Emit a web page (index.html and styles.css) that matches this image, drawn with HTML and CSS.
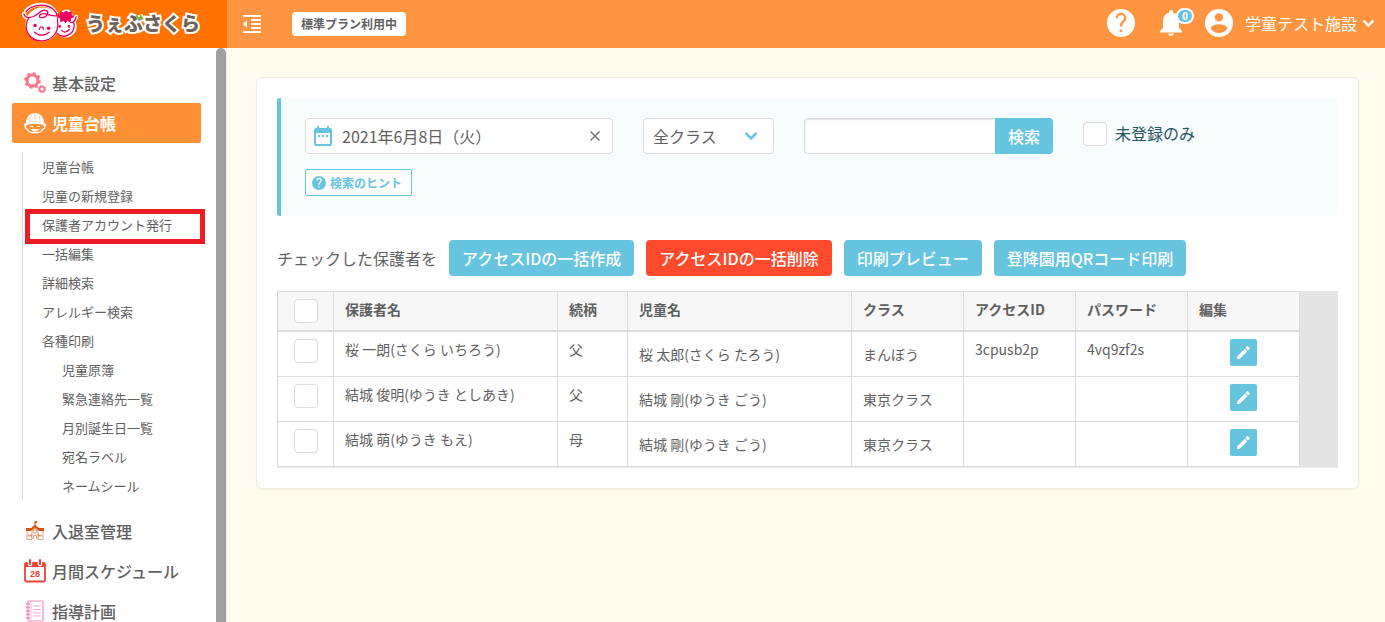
FILE: index.html
```html
<!DOCTYPE html>
<html lang="ja">
<head>
<meta charset="utf-8">
<meta name="viewport" content="width=device-width, initial-scale=1">
<title>保護者アカウント発行 | うぇぶさくら</title>
<link rel="stylesheet" href="styles.css">
</head>
<body>
<svg class="sprite" aria-hidden="true">
  <symbol id="i-help" viewBox="0 0 24 24"><path fill-rule="evenodd" d="M12 0a12 12 0 1 0 0 24 12 12 0 0 0 0-24zm1.100 19.700h-2.200v-2.200h2.200zm2.500-9.300-1.100 1.200c-.9.9-1.400 1.700-1.400 3.500h-2.200v-.6c0-1.300.5-2.500 1.400-3.400l1.500-1.600c.5-.4.8-1 .8-1.800a2.600 2.600 0 0 0-5.200 0H7.400a4.600 4.600 0 1 1 9.200 0c0 1.100-.4 2-1 2.700z"/></symbol>
  <symbol id="i-pencil" viewBox="0 0 24 24"><path d="M3 17.500V21h3.500L17.300 10.200l-3.500-3.500zM20.700 7a1 1 0 0 0 0-1.400l-2.300-2.300a1 1 0 0 0-1.400 0l-2.300 2.300 3.700 3.700z"/></symbol>
  <symbol id="i-chevron" viewBox="0 0 14 10"><path d="M1.500 1.800 7 7.300l5.500-5.500" fill="none" stroke="currentColor" stroke-width="2.600"/></symbol>
</svg>

<header class="header">
  <a class="brand" href="#">
    <svg class="brand-mark" viewBox="0 0 60 44" aria-hidden="true">
      <g fill="#fff" stroke="#fff" stroke-width="3" stroke-linejoin="round" stroke-linecap="round">
        <circle cx="21" cy="23" r="16"/><circle cx="45" cy="25" r="10"/><circle cx="46" cy="14" r="5"/>
        <path d="M2 12c1 6 9 5 14 2M4 9c8-9 25-9 31 2M56 15c-1 4-3 6-6 6" fill="none" stroke-width="4"/>
      </g>
      <g fill="none" stroke="#e8005f" stroke-width="1.300" stroke-linecap="round" stroke-linejoin="round">
        <path d="M2 12c1 5 8 5 13 1 5-4 8-6 11-4 2 2-1 7-5 7s-4-3 0-4c5-1 8 3 16 2"/>
        <path d="M4 10C10 2 25 1 32 7c2 2 4 4 4 6M7 16c-7 12 1 24 13 24 11 0 18-9 17-19-1-3 0-5 1-8"/>
        <path d="M36 32c7 7 18 1 18-8 0-2-1-3-1-4M56 15c-1 4-2 6-6 6"/>
        <path d="M13 31c4 4 11 4 15 0M18 28v-1c1-2 4-2 4 0v1M41 29c2 3 6 2 8-1"/>
      </g>
      <g fill="#e8005f">
        <circle cx="13.500" cy="24" r="1.800"/><circle cx="27.500" cy="27" r="1.800"/><circle cx="39" cy="25" r="1.400"/><circle cx="48.500" cy="25" r="1.400"/>
        <path d="m46 9 2 2 3-1v3l2 2-3 2v3l-3-1-2 2-2-2-3 1v-3l-2-2 2-2v-3l3 1z" stroke="#e8005f" stroke-width="1" stroke-linejoin="round"/>
      </g>
    </svg>
    <span class="brand-name">うぇぶさくら
      <svg class="brand-leaf" width="9" height="7" viewBox="0 0 9 7" aria-hidden="true"><path d="m1.500 2 2 3M5.500 1.500l2 3" stroke="#7cc52c" stroke-width="2" stroke-linecap="round"/></svg>
    </span>
  </a>
  <div class="toolbar">
    <button class="icon-button" type="button" aria-label="メニューを閉じる">
      <svg width="18" height="18" viewBox="0 0 18 18" fill="#fff"><path d="M0 0h18v2H0zM8 4h10v2H8zM8 8h10v2H8zM8 12h10v2H8zM0 16h18v2H0zM4 5v8L0 9z"/></svg>
    </button>
    <span class="plan">標準プラン利用中</span>
    <div class="toolbar-right">
      <button class="icon-button" type="button" aria-label="ヘルプ"><svg width="28" height="28" fill="#fff"><use href="#i-help"/></svg></button>
      <button class="icon-button bell" type="button" aria-label="お知らせ">
        <svg width="22" height="26" viewBox="0 0 22 26" fill="#fff"><path d="M11 26a2.800 2.800 0 0 0 2.800-2.500H8.200A2.800 2.800 0 0 0 11 26zM19 18v-7c0-4-2.200-7.300-6-8.200V2a2 2 0 0 0-4 0v.8C5.200 3.700 3 7 3 11v7l-3 3v1.500h22V21z"/></svg>
        <span class="badge">0</span>
      </button>
      <button class="account" type="button">
        <svg width="28" height="28" viewBox="0 0 28 28" fill="#fff"><path d="M14 0a14 14 0 1 0 0 28 14 14 0 0 0 0-28zm0 4.200a4.200 4.200 0 1 1 0 8.400 4.200 4.200 0 0 1 0-8.400zm0 19.900a10 10 0 0 1-8.400-4.500c0-2.800 5.600-4.300 8.400-4.300s8.400 1.500 8.400 4.300A10 10 0 0 1 14 24z"/></svg>
        <span class="account-name">学童テスト施設</span>
        <svg width="13" height="9"><use href="#i-chevron"/></svg>
      </button>
    </div>
  </div>
</header>

<div class="shell">
  <nav class="sidebar" aria-label="メインメニュー">
    <ul class="menu">
      <li><a class="menu-link" href="#">
        <svg class="menu-icon" viewBox="0 0 22 22" fill="none" stroke="#ff7488"><circle cx="8.500" cy="8.500" r="5.500" stroke-width="3"/><circle cx="8.500" cy="8.500" r="7.300" stroke-width="2" stroke-dasharray="3 2.730"/><circle cx="18" cy="17" r="2.500" stroke-width="1.700"/><circle cx="18" cy="17" r="3.500" stroke-width="1.200" stroke-dasharray="1.500 1.250"/></svg>
        基本設定</a></li>
      <li><a class="menu-link active" href="#" aria-current="true">
        <svg class="menu-icon" viewBox="0 0 22 22"><path d="M2 11C2 5 6 1 11 1s9 4 9 10l2 1v2c-6-3-16-3-22 0v-2z" fill="#fff"/><path d="M8 2.500C6 5 6 8 6 10.500M14 2.500c2 2.500 2 5.500 2 8M11 1v9" fill="none" stroke="#ff9540" stroke-width=".5"/><path d="M3 13c-3 0-2 4 0 4 2 5 14 5 16 0 2 0 3-4 0-4" fill="none" stroke="#fff" stroke-width="1.300"/><path d="M6 14.500h3M13 14.500h3M8 17.500c2 2 4 2 6 0z" fill="#fff" stroke="#fff" stroke-width="1.200"/></svg>
        児童台帳</a>
        <ul class="submenu">
          <li><a href="#">児童台帳</a></li>
          <li><a href="#">児童の新規登録</a></li>
          <li class="marked"><a href="#">保護者アカウント発行</a></li>
          <li><a href="#">一括編集</a></li>
          <li><a href="#">詳細検索</a></li>
          <li><a href="#">アレルギー検索</a></li>
          <li><a href="#">各種印刷</a>
            <ul class="nested">
              <li><a href="#">児童原簿</a></li>
              <li><a href="#">緊急連絡先一覧</a></li>
              <li><a href="#">月別誕生日一覧</a></li>
              <li><a href="#">宛名ラベル</a></li>
              <li><a href="#">ネームシール</a></li>
            </ul>
          </li>
        </ul>
      </li>
      <li><a class="menu-link" href="#">
        <svg class="menu-icon" viewBox="0 0 22 22"><path d="M3 11v8.500h5v-7M19 11v8.500h-5v-7" fill="#fff" stroke="#dfa67b"/><path d="M8 19.500V11l3-3 3 3v8.500" fill="#fff" stroke="#dfa67b"/><path d="M10.500 1H13v2h-1.500v2l3.500 3h5v3h-5l-4-3.500L7 11H2V8h5l3.500-3z" fill="#d35410"/><circle cx="11" cy="11.500" r="1.700" fill="#fff" stroke="#dd8750" stroke-width=".8"/><path d="M9.500 19v-3.500h3V19" fill="none" stroke="#dfa67b"/><path d="M4.500 14.500h1v2h-1zm2 0h1v2h-1zm8 0h1v2h-1zm2 0h1v2h-1z" fill="#d35410"/></svg>
        入退室管理</a></li>
      <li><a class="menu-link" href="#">
        <svg class="menu-icon" viewBox="0 0 22 22"><rect x="1" y="3" width="20" height="18.500" rx="1.500" fill="#fff" stroke="#e94335" stroke-width="1.800"/><path d="M1 3h20v4H1z" fill="#e94335"/><path d="M6 1v3M16 1v3" stroke="#fff" stroke-width="4.500" stroke-linecap="round"/><path d="M6 0v4M16 0v4" stroke="#e94335" stroke-width="2.200" stroke-linecap="round"/><text class="calendar-day" x="11" y="17" text-anchor="middle">28</text></svg>
        月間スケジュール</a></li>
      <li><a class="menu-link" href="#">
        <svg class="menu-icon" viewBox="0 0 22 22" fill="none" stroke="#f78bbf"><rect x="4" y="1" width="15" height="20" rx="1" stroke-width="1.200"/><path d="M7 1v20" stroke-width=".6"/><path d="M2 4h4M2 7.500h4M2 11h4M2 14.500h4M2 18h4" stroke-width="1.500"/><path d="M9.500 6h7M9.500 9.500h7M9.500 13h7M9.500 16h7" stroke-width=".8"/></svg>
        指導計画</a></li>
    </ul>
    <div class="scroll-thumb"></div>
  </nav>

  <main class="content">
    <section class="card">
      <form class="filter">
        <div class="filter-row">
          <div class="date-field">
            <svg width="18" height="20" viewBox="0 0 18 20"><path d="M16 2h-1V0h-2v2H5V0H3v2H2a2 2 0 0 0-2 2v14a2 2 0 0 0 2 2h14a2 2 0 0 0 2-2V4a2 2 0 0 0-2-2zm0 16H2V7h14zM4 9h2v2H4zm4 0h2v2H8zm4 0h2v2h-2z" fill="#67c4df"/></svg>
            <input type="text" aria-label="日付" value="2021年6月8日（火）">
            <button class="icon-button" type="button" aria-label="日付をクリア"><svg width="10" height="10" viewBox="0 0 10 10"><path d="m.5.5 9 9m0-9-9 9" stroke="#666" stroke-width="1.300"/></svg></button>
          </div>
          <div class="select-field">
            <select aria-label="クラス"><option>全クラス</option></select>
            <svg width="14" height="10"><use href="#i-chevron"/></svg>
          </div>
          <div class="search-field">
            <input type="text" aria-label="キーワード">
            <button type="submit">検索</button>
          </div>
          <label class="check-label"><input class="check" type="checkbox"><span>未登録のみ</span></label>
        </div>
        <button class="hint" type="button"><svg width="14" height="14"><use href="#i-help"/></svg>検索のヒント</button>
      </form>

      <div class="actions">
        <span>チェックした保護者を</span>
        <button class="button" type="button">アクセスIDの一括作成</button>
        <button class="button danger" type="button">アクセスIDの一括削除</button>
        <button class="button" type="button">印刷プレビュー</button>
        <button class="button" type="button">登降園用QRコード印刷</button>
      </div>

      <div class="table-wrap">
        <table>
          <colgroup><col class="c-check"><col class="c-name"><col class="c-rel"><col class="c-name"><col class="c-std"><col class="c-std"><col class="c-std"><col class="c-edit"></colgroup>
          <thead>
            <tr><th><input class="check" type="checkbox" aria-label="すべて選択"></th><th>保護者名</th><th>続柄</th><th>児童名</th><th>クラス</th><th>アクセスID</th><th>パスワード</th><th>編集</th></tr>
          </thead>
          <tbody>
            <tr><td><input class="check" type="checkbox" aria-label="桜 一朗を選択"></td><td>桜 一朗(さくら いちろう)</td><td>父</td><td class="child">桜 太郎(さくら たろう)</td><td class="child">まんぼう</td><td>3cpusb2p</td><td>4vq9zf2s</td><td><button class="edit" type="button" aria-label="編集"><svg width="17" height="17"><use href="#i-pencil"/></svg></button></td></tr>
            <tr><td><input class="check" type="checkbox" aria-label="結城 俊明を選択"></td><td>結城 俊明(ゆうき としあき)</td><td>父</td><td class="child">結城 剛(ゆうき ごう)</td><td class="child">東京クラス</td><td></td><td></td><td><button class="edit" type="button" aria-label="編集"><svg width="17" height="17"><use href="#i-pencil"/></svg></button></td></tr>
            <tr><td><input class="check" type="checkbox" aria-label="結城 萌を選択"></td><td>結城 萌(ゆうき もえ)</td><td>母</td><td class="child">結城 剛(ゆうき ごう)</td><td class="child">東京クラス</td><td></td><td></td><td><button class="edit" type="button" aria-label="編集"><svg width="17" height="17"><use href="#i-pencil"/></svg></button></td></tr>
          </tbody>
        </table>
      </div>
    </section>
  </main>
</div>
</body>
</html>
```
FILE: styles.css
```css
:root {
  --orange: #ff9540;
  --blue: #67c4df;
  --line: #dadada;
  --text: #5f5f5f;
}

* { box-sizing: border-box; }

body {
  display: flex;
  flex-direction: column;
  height: 100vh;
  margin: 0;
  overflow: hidden;
  background: #fffaee;
  color: var(--text);
  font: 16px/24px "Noto Sans CJK JP", sans-serif;
}

button, input, select { font: inherit; color: inherit; }

button {
  padding: 0;
  border: 0;
  background: none;
  cursor: pointer;
}

a { color: inherit; text-decoration: none; }

ul { margin: 0; padding: 0; list-style: none; }

svg { display: block; flex: none; }

.sprite { position: absolute; width: 0; height: 0; }

/* Header */
.header { display: flex; flex: none; height: 48px; }

.brand {
  display: flex;
  align-items: center;
  gap: 6px;
  width: 227px;
  padding: 0 0 2px 22px;
  background: #ff7200;
}

.brand-mark { width: 58px; height: 43px; }

.brand-name {
  position: relative;
  color: #6f6259;
  font-size: 19px;
  font-weight: 900;
  white-space: nowrap;
  -webkit-text-stroke: 4px #fff;
  paint-order: stroke fill;
}

.brand-leaf {
  position: absolute;
  top: 3px;
  left: 49px;
}

.toolbar {
  display: flex;
  flex: 1;
  align-items: center;
  padding: 0 10px 0 16px;
  background: var(--orange);
  color: #fff;
}

.plan {
  margin-left: 31px;
  padding: 0 9px;
  border-radius: 4px;
  background: #fff;
  color: var(--text);
  font-size: 12px;
  font-weight: 700;
}

.toolbar-right {
  display: flex;
  align-items: center;
  margin-left: auto;
  padding-bottom: 2px;
}

.bell { position: relative; margin: 0 23px 0 25px; }

.badge {
  position: absolute;
  top: -2px;
  left: 16px;
  width: 18px;
  height: 16px;
  border: 2px solid #fff;
  border-radius: 8px;
  background: var(--blue);
  font: 700 12px/12px "Liberation Serif", serif;
}

.account { display: flex; align-items: center; }
.account-name { margin: 0 5px 0 12px; }

/* Sidebar */
.shell { display: flex; flex: 1; min-height: 0; }

.sidebar {
  display: flex;
  flex: none;
  width: 227px;
  overflow: hidden;
  border-right: 1px solid #eee;
  background: #fff;
}

.menu { flex: 1; padding: 15px 15px 0 12px; }

.menu-link {
  display: flex;
  align-items: center;
  gap: 6px;
  height: 40px;
  padding: 0 12px;
  font-weight: 500;
}

.menu-link.active {
  border-radius: 2px;
  background: #ff9035;
  color: #fff;
  font-weight: 700;
}

.menu-icon { width: 22px; height: 22px; overflow: visible; }

.calendar-day { fill: #e94335; font: 700 9px "Liberation Sans", sans-serif; }

.submenu {
  margin: 9px 0 11px 10px;
  border-left: 1px solid var(--line);
  font-size: 13px;
  line-height: 29px;
}

.submenu a { display: block; padding-left: 19px; }
.nested { padding-left: 20px; }

.marked { position: relative; }

.marked::after {
  content: "";
  position: absolute;
  inset: -1px -4px -5px 2px;
  border: 5px solid #ed1c24;
  pointer-events: none;
}

.scroll-thumb {
  width: 10px;
  border-radius: 5px 5px 0 0;
  background: #9f9f9f;
}

/* Card */
.content { flex: 1; min-width: 0; padding: 29px 26px 0 29px; overflow: auto; }

.card {
  padding: 20px;
  border: 1px solid #f0ece2;
  border-radius: 6px;
  background: #fff;
  box-shadow: 0 1px 2px rgba(0, 0, 0, .04);
}

.filter {
  padding: 20px 24px;
  border-left: 4px solid var(--blue);
  border-radius: 3px;
  background: #f7fdfd;
}

.filter-row { display: flex; flex-wrap: wrap; gap: 30px; }

.date-field,
.select-field select,
.search-field input {
  height: 36px;
  border: 1px solid var(--line);
  border-radius: 4px;
  background: #fff;
}

.date-field {
  display: flex;
  align-items: center;
  gap: 10px;
  width: 308px;
  padding: 0 12px 0 8px;
}

.date-field input {
  flex: 1;
  min-width: 0;
  padding: 0;
  border: 0;
  outline: 0;
}

.select-field { position: relative; width: 131px; }

.select-field select {
  width: 100%;
  padding: 0 9px;
  appearance: none;
}

.select-field svg {
  position: absolute;
  top: 13px;
  right: 16px;
  color: var(--blue);
  pointer-events: none;
}

.search-field { display: flex; }

.search-field input {
  width: 191px;
  border-right: 0;
  border-radius: 4px 0 0 4px;
  box-shadow: inset 0 1px 2px rgba(0, 0, 0, .1);
}

.search-field button {
  width: 58px;
  border-radius: 0 4px 4px 0;
  background: var(--blue);
  color: #fff;
  font-weight: 500;
}

.check-label {
  display: flex;
  gap: 8px;
  align-items: center;
  height: 32px;
  color: #255563;
}

.check-label span { padding-bottom: 2px; }

.check {
  display: block;
  flex: none;
  width: 24px;
  height: 24px;
  margin: 0;
  border: 1px solid var(--line);
  border-radius: 4px;
  background: #fff;
  appearance: none;
}

.check:checked { background: var(--blue); }

.hint {
  display: flex;
  align-items: center;
  gap: 4px;
  height: 27px;
  margin-top: 15px;
  padding: 0 9px 0 6px;
  border: 1px solid var(--blue);
  border-radius: 2px;
  background: #fff;
  color: var(--blue);
  font-size: 12px;
  font-weight: 700;
}

.hint svg, .edit svg { fill: currentColor; }

.actions {
  display: flex;
  flex-wrap: wrap;
  align-items: center;
  gap: 12px;
  margin: 24px 0 15px;
}

.button {
  height: 36px;
  padding: 0 13px;
  border-radius: 4px;
  background: var(--blue);
  color: #fff;
  font-weight: 500;
}

.danger { background: #ff4a2d; }

/* Table */
.table-wrap {
  overflow-x: auto;
  border-bottom: 1px solid #ebebeb;
  background: #e4e4e4;
}

table {
  width: 1023px;
  border-spacing: 0;
  table-layout: fixed;
  background: #fff;
  font-size: 14px;
  line-height: 21px;
}

.c-check { width: 56px; }
.c-name { width: 224px; }
.c-rel { width: 70px; }
.c-std { width: 112px; }
.c-edit { width: 113px; }

th, td {
  height: 45px;
  padding: 7px 11px;
  border: solid var(--line);
  border-width: 0 0 1px 1px;
  text-align: left;
  vertical-align: top;
}

th {
  height: 41px;
  padding-bottom: 0;
  border-top-width: 1px;
  border-bottom-width: 2px;
  background: #f7f7f7;
  font-weight: 700;
}

th:last-child, td:last-child { border-right-width: 1px; }

.child { padding-top: 12px; padding-bottom: 0; }

th .check, td .check { margin: 0 auto; }

.edit {
  display: flex;
  align-items: center;
  justify-content: center;
  width: 27px;
  height: 27px;
  margin: 0 auto;
  border-radius: 2px;
  background: var(--blue);
  color: #fff;
}
```
